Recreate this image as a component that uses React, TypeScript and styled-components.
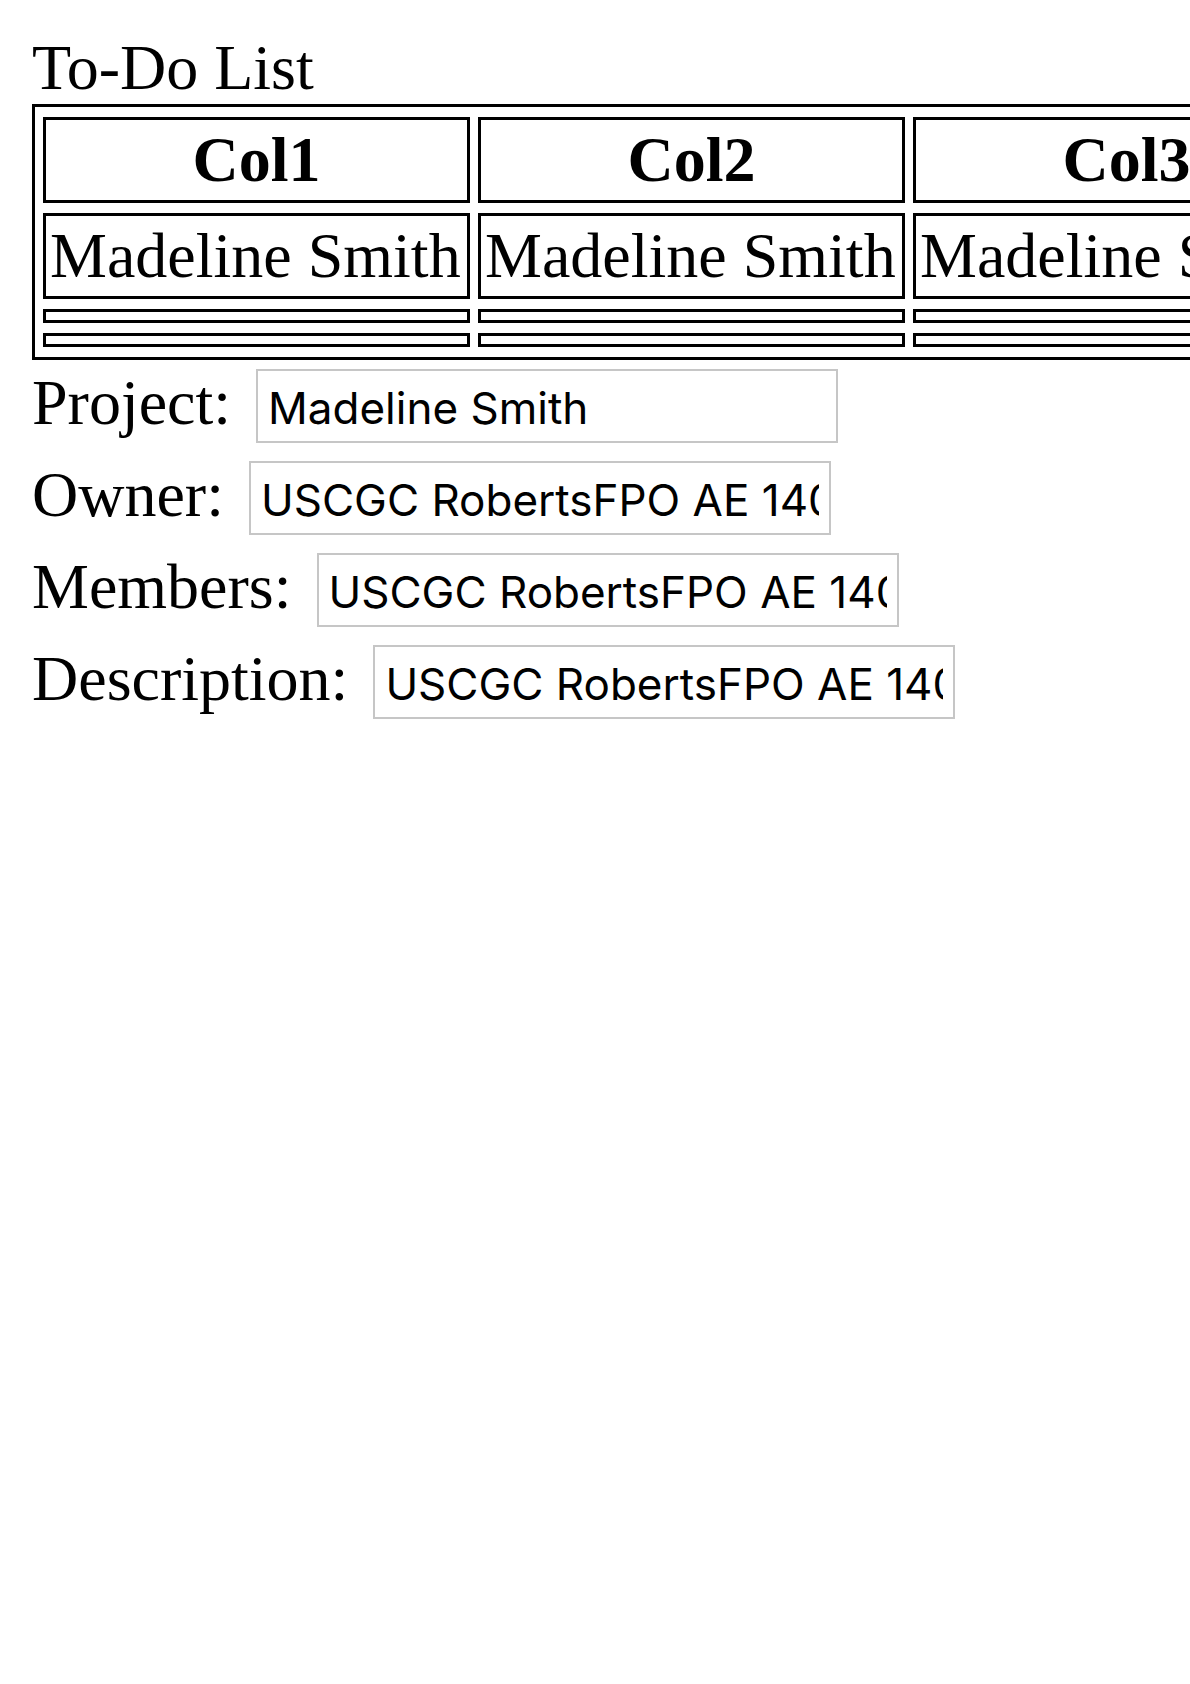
import React from "react";
import styled, { createGlobalStyle } from "styled-components";

const GlobalStyle = createGlobalStyle`
  html, body {
    margin: 0;
    padding: 0;
    background: #ffffff;
    overflow-x: hidden;
  }
  body {
    padding: 32px;
    font-family: "Liberation Serif", "Times New Roman", serif;
    font-size: 64px;
    color: #000000;
  }
`;

const Title = styled.div`
  line-height: 72px;
  height: 72px;
`;

const Table = styled.table`
  border: 3px solid #000;
  border-spacing: 8px 10px;
  border-collapse: separate;
  table-layout: fixed;
  width: 1317px;
  font-size: 64px;
`;

const HeadCell = styled.th`
  border: 3px solid #000;
  padding: 4px;
  width: 413px;
  line-height: 72px;
  font-weight: bold;
  text-align: center;
  white-space: nowrap;
  overflow: hidden;
`;

const Cell = styled.td`
  border: 3px solid #000;
  padding: 4px;
  width: 413px;
  line-height: 72px;
  text-align: left;
  white-space: nowrap;
  overflow: hidden;
`;

const EmptyCell = styled.td`
  border: 3px solid #000;
  padding: 4px;
  height: 0;
  line-height: 0;
`;

const Form = styled.div`
  display: flex;
  flex-direction: column;
  gap: 18px;
  padding-top: 9px;
`;

const Row = styled.div`
  display: flex;
  align-items: flex-start;
  gap: 25px;
`;

const Label = styled.label`
  line-height: 67px;
  white-space: nowrap;
`;

const Field = styled.input`
  box-sizing: border-box;
  width: 582px;
  height: 74px;
  border: 2px solid #c6c6c6;
  border-radius: 0;
  padding: 3px 10px 0 10px;
  margin: 0;
  font-family: Inter, "Liberation Sans", sans-serif;
  font-size: 44px;
  color: #000;
  background: #fff;
  outline: none;
`;

const columns = ["Col1", "Col2", "Col3"];
const address = "USCGC RobertsFPO AE 14065";

const fields: [string, string][] = [
  ["Project:", "Madeline Smith"],
  ["Owner:", address],
  ["Members:", address],
  ["Description:", address],
];

const App = () => {
  return (
    <>
      <GlobalStyle />
      <Title>To-Do List</Title>
      <Table>
        <tbody>
          <tr>
            {columns.map((c) => (
              <HeadCell key={c}>{c}</HeadCell>
            ))}
          </tr>
          <tr>
            {columns.map((c) => (
              <Cell key={c}>Madeline Smith</Cell>
            ))}
          </tr>
          <tr>
            {columns.map((c) => (
              <EmptyCell key={c} />
            ))}
          </tr>
          <tr>
            {columns.map((c) => (
              <EmptyCell key={c} />
            ))}
          </tr>
        </tbody>
      </Table>
      <Form>
        {fields.map(([label, value]) => (
          <Row key={label}>
            <Label>{label}</Label>
            <Field type="text" defaultValue={value} />
          </Row>
        ))}
      </Form>
    </>
  );
};

export default App;
